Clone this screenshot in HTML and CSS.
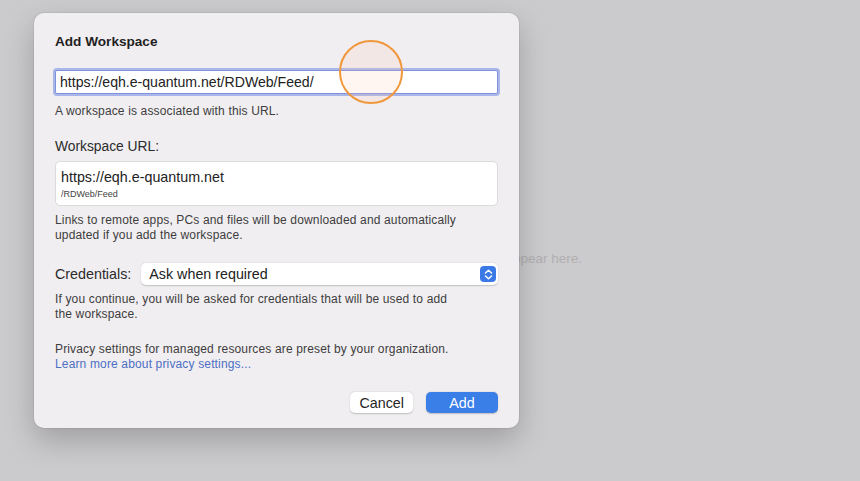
FILE: index.html
```html
<!DOCTYPE html>
<html lang="en">
<head>
  <meta charset="UTF-8" />
  <title>Add Workspace</title>
  <link rel="stylesheet" href="styles.css">
</head>
<body>
  <main class="window">
    <p class="empty-state">Workspaces will appear here.</p>
  </main>

  <section class="sheet">
    <h2 class="sheet-title">Add Workspace</h2>

    <div class="url-field">
      <input type="text" value="https://eqh.e-quantum.net/RDWeb/Feed/">
      <span class="click-mark"></span>
    </div>
    <p class="note">A workspace is associated with this URL.</p>

    <p class="label">Workspace URL:</p>
    <div class="url-box">
      <div class="url-host">https://eqh.e-quantum.net</div>
      <div class="url-path">/RDWeb/Feed</div>
    </div>
    <p class="note lines">Links to remote apps, PCs and files will be downloaded and automatically<br>updated if you add the workspace.</p>

    <div class="cred-row">
      <span class="label">Credentials:</span>
      <div class="popup">
        <span>Ask when required</span>
        <span class="stepper">
          <svg width="9" height="11" viewBox="0 0 9 11">
            <path d="M1.5 4 L4.5 1.3 L7.5 4 M1.5 7 L4.5 9.7 L7.5 7" fill="none" stroke="#fff" stroke-width="1.5" stroke-linecap="round" stroke-linejoin="round"/>
          </svg>
        </span>
      </div>
    </div>
    <p class="note lines">If you continue, you will be asked for credentials that will be used to add<br>the workspace.</p>

    <p class="note lines privacy">Privacy settings for managed resources are preset by your organization.<br><a href="#">Learn more about privacy settings...</a></p>

    <div class="actions">
      <button class="btn">Cancel</button>
      <button class="btn primary">Add</button>
    </div>
  </section>
</body>
</html>
```

FILE: styles.css
```css
body {
  margin: 0;
  width: 860px;
  height: 481px;
  overflow: hidden;
  background: #cbcacc;
  font-family: 'Liberation Sans', Arial, sans-serif;
  color: #262626;
  position: relative;
}
.window {
  height: 481px;
  display: flex;
  align-items: center;
  justify-content: flex-end;
  padding-right: 278px;
  padding-top: 36px;
  box-sizing: border-box;
}
.empty-state {
  margin: 0;
  font-size: 13.5px;
  color: #b1b0b2;
}

/* the modal sheet sits over the window */
.sheet {
  position: absolute;
  left: 34px;
  top: 13px;
  width: 485px;
  box-sizing: border-box;
  padding: 21px 21px 15px;
  background: #f1eef1;
  border-radius: 10px;
  box-shadow: 0 12px 30px rgba(0, 0, 0, 0.22), 0 0 0 1px rgba(0, 0, 0, 0.05);
}
.sheet-title {
  margin: 0;
  font-size: 13.6px;
  line-height: 16px;
  font-weight: bold;
  color: #1f1f1f;
}
.url-field {
  position: relative;
  margin-top: 20px;
}
.url-field input {
  display: block;
  width: 100%;
  height: 24px;
  box-sizing: border-box;
  margin: 0;
  padding: 0 4px;
  font-family: inherit;
  font-size: 14.1px;
  color: #222;
  background: #fff;
  border: 1px solid #7f92db;
  border-radius: 2px;
  box-shadow: 0 0 0 2px #a9b6ea;
  outline: none;
}
.click-mark {
  position: absolute;
  left: 284px;
  top: -30px;
  width: 64px;
  height: 64px;
  box-sizing: border-box;
  border: 2px solid #f0973c;
  border-radius: 50%;
  background: rgba(255, 190, 160, 0.14);
}
.note {
  margin: 10px 0 0;
  font-size: 12px;
  letter-spacing: 0.15px;
  line-height: 14px;
  color: #3d3d3d;
}
.note.lines {
  margin-top: 7px;
  line-height: 15px;
}
.note.privacy {
  margin-top: 20px;
}
.note a {
  color: #4c6fc4;
  text-decoration: none;
}
.label {
  margin: 21px 0 0;
  font-size: 13.8px;
  line-height: 16px;
  color: #2b2b2b;
}
.url-box {
  margin-top: 6px;
  height: 45px;
  box-sizing: border-box;
  padding: 7px 5px 0;
  background: #fff;
  border: 1px solid #dcdadd;
  border-radius: 5px;
}
.url-host {
  font-size: 14.3px;
  line-height: 16px;
  color: #222;
}
.url-path {
  margin-top: 4px;
  font-size: 9px;
  line-height: 10px;
  color: #444;
}
.cred-row {
  margin-top: 20px;
  display: flex;
  align-items: center;
  gap: 10px;
}
.cred-row .label {
  margin: 0;
  font-size: 14.3px;
}
.popup {
  flex: 1;
  height: 22px;
  display: flex;
  align-items: center;
  justify-content: space-between;
  padding: 0 2px 0 8px;
  background: #fff;
  border-radius: 5px;
  box-shadow: 0 0.5px 1.5px rgba(0, 0, 0, 0.2);
  font-size: 14.3px;
  color: #222;
}
.stepper {
  width: 16px;
  height: 16px;
  display: flex;
  align-items: center;
  justify-content: center;
  background: #3b7ae6;
  border-radius: 4px;
}
.actions {
  margin-top: 20px;
  display: flex;
  justify-content: flex-end;
  gap: 13px;
}
.btn {
  height: 21px;
  padding: 0 9px;
  font-family: inherit;
  font-size: 14.3px;
  color: #262626;
  background: #fff;
  border: none;
  border-radius: 5px;
  box-shadow: 0 0.5px 1.5px rgba(0, 0, 0, 0.22);
}
.btn.primary {
  width: 72px;
  color: #fff;
  background: #3a7ee8;
}
```
